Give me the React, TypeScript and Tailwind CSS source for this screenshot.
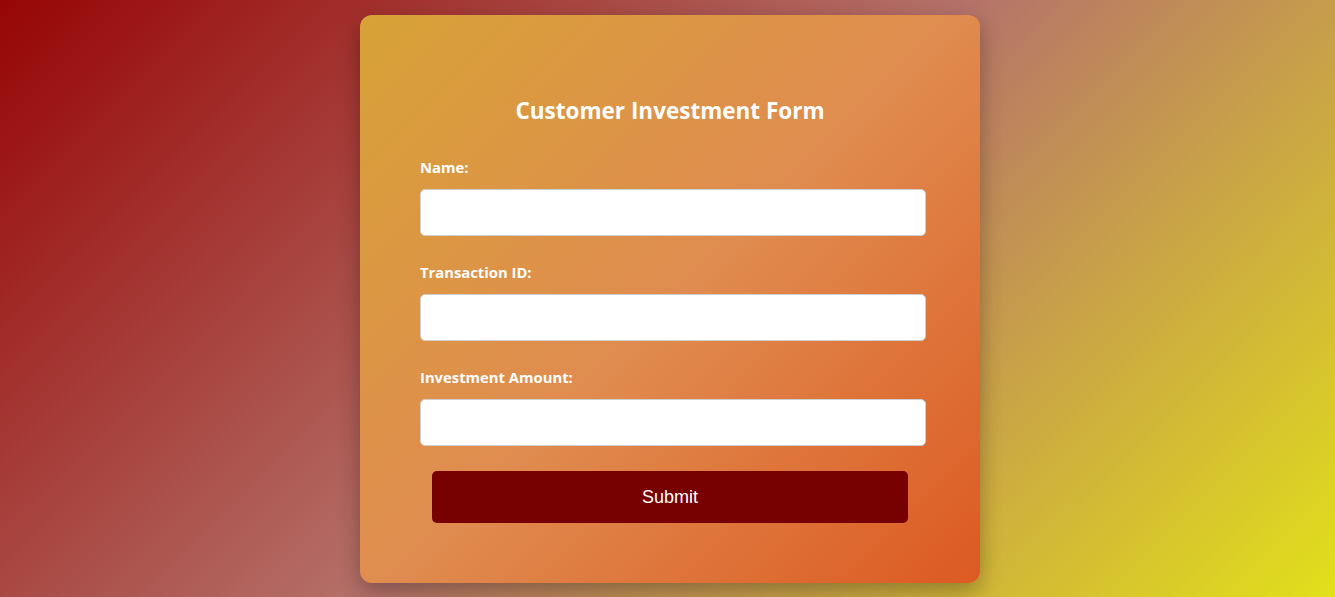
import React from "react";

export default function App() {
  return (
    <div className="relative w-full h-[597px] flex justify-start items-start pt-[15px] pl-[360px] overflow-hidden">
      <div className="absolute inset-0 -z-10 bg-[linear-gradient(135deg,#960505_0%,#b5726a_50%,#e2e01a_100%)]" />
      <div className="w-[620px] h-[568px] rounded-[12px] px-[60px] pt-[81px] bg-[linear-gradient(135deg,#d7a236_0%,#e08c50_50%,#dc5a22_100%)] shadow-[0_8px_22px_rgba(0,0,0,0.3)] font-['Open_Sans',sans-serif]">
        <h2 className="text-white font-bold text-[22.5px] leading-[30px] text-center">
          Customer Investment Form
        </h2>
        <div className="mt-[31px] flex flex-col">
          {["Name:", "Transaction ID:", "Investment Amount:"].map((l, i) => (
            <div key={l} className={i > 0 ? "mt-[26px]" : ""}>
              <label className="block text-white font-bold text-[14.8px] leading-[20px]">{l}</label>
              <input
                type="text"
                className="block mt-[12px] w-[506px] h-[47px] bg-white border border-[#cfcfcf] rounded-[5px]"
              />
            </div>
          ))}
          <button className="mt-[25px] ml-[12px] w-[476px] h-[52px] rounded-[5px] bg-[#770000] text-white text-[18px] font-['Liberation_Sans',Arial,sans-serif]">
            Submit
          </button>
        </div>
      </div>
    </div>
  );
}
